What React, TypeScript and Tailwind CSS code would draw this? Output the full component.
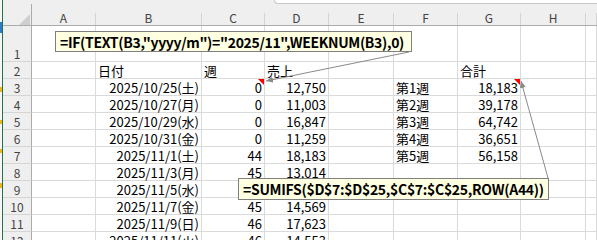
import React from "react";

type Cell = { t?: string; al?: "l" | "r"; tri?: boolean };
type Row = { n: number; h: string; cells: Record<string, Cell> };

const cols = [
  { k: "A", w: "w-[64px]" },
  { k: "B", w: "w-[106px]" },
  { k: "C", w: "w-[63px]" },
  { k: "D", w: "w-[64px]" },
  { k: "E", w: "w-[65px]" },
  { k: "F", w: "w-[64px]" },
  { k: "G", w: "w-[63px]" },
  { k: "H", w: "w-[65px]" },
  { k: "I", w: "w-[11px]" },
];

const r = (t: string): Cell => ({ t, al: "r" });
const l = (t: string): Cell => ({ t, al: "l" });

const rows: Row[] = [
  { n: 1, h: "h-[36px]", cells: {} },
  { n: 2, h: "h-[17px]", cells: { B: l("日付"), C: l("週"), D: l("売上"), G: l("合計") } },
  { n: 3, h: "h-[17px]", cells: { B: r("2025/10/25(土)"), C: { t: "0", al: "r", tri: true }, D: r("12,750"), F: l("第1週"), G: { t: "18,183", al: "r", tri: true } } },
  { n: 4, h: "h-[17px]", cells: { B: r("2025/10/27(月)"), C: r("0"), D: r("11,003"), F: l("第2週"), G: r("39,178") } },
  { n: 5, h: "h-[17px]", cells: { B: r("2025/10/29(水)"), C: r("0"), D: r("16,847"), F: l("第3週"), G: r("64,742") } },
  { n: 6, h: "h-[17px]", cells: { B: r("2025/10/31(金)"), C: r("0"), D: r("11,259"), F: l("第4週"), G: r("36,651") } },
  { n: 7, h: "h-[17px]", cells: { B: r("2025/11/1(土)"), C: r("44"), D: r("18,183"), F: l("第5週"), G: r("56,158") } },
  { n: 8, h: "h-[17px]", cells: { B: r("2025/11/3(月)"), C: r("45"), D: r("13,014") } },
  { n: 9, h: "h-[17px]", cells: { B: r("2025/11/5(水)"), C: r("45"), D: r("11,595") } },
  { n: 10, h: "h-[17px]", cells: { B: r("2025/11/7(金)"), C: r("45"), D: r("14,569") } },
  { n: 11, h: "h-[17px]", cells: { B: r("2025/11/9(日)"), C: r("46"), D: r("17,623") } },
  { n: 12, h: "h-[17px]", cells: { B: r("2025/11/11(火)"), C: r("46"), D: r("14,553") } },
];

function RedTri() {
  return (
    <svg className="absolute right-0 top-0" width="6" height="6" viewBox="0 0 6 6">
      <polygon points="0,0 6,0 6,6" fill="#ff0000" />
    </svg>
  );
}

export default function App() {
  return (
    <div className="relative w-[597px] h-[240px] overflow-hidden bg-white flex font-['Noto_Sans_CJK_JP',sans-serif] text-black">
      {/* left window edge */}
      <div className="w-[2px] h-full shrink-0 bg-[#f6f6f6] flex flex-col">
        <div className="h-[22px] shrink-0" />
        <div className="h-[11px] shrink-0 bg-[#2f7bc9]" />
        <div className="h-[54px] shrink-0" />
        <div className="h-[5px] shrink-0 bg-[#e8b923]" />
        <div className="h-[28px] shrink-0" />
        <div className="h-[4px] shrink-0 bg-[#e8b923]" />
        <div className="h-[25px] shrink-0" />
        <div className="h-[4px] shrink-0 bg-[#e8b923]" />
        <div className="h-[30px] shrink-0" />
        <div className="h-[5px] shrink-0 bg-[#e8b923]" />
      </div>
      <div className="w-[1px] h-full shrink-0 bg-[#217346]" />

      {/* sheet */}
      <div className="flex flex-col flex-1 min-h-0">
        {/* top strip */}
        <div className="h-[4px] shrink-0 flex bg-[#efefef]">
          <div className="w-[271px]" />
          <div className="flex-1 bg-white border-l border-b border-[#c8c8c8] rounded-bl-[5px]" />
        </div>
        {/* column header */}
        <div className="h-[22px] shrink-0 flex bg-[#efefef] border-b border-[#ababab]">
          <div className="w-[29px] h-full flex items-end justify-end border-r border-[#ababab]">
            <svg width="11" height="11" viewBox="0 0 11 11" className="mr-[1px]">
              <polygon points="11,0 11,11 0,11" fill="#cfcfcf" />
            </svg>
          </div>
          {cols.map((c) => (
            <div key={c.k} className={`${c.w} h-full flex items-end`}>
              <div className="flex-1 text-center text-[12px] leading-[14px] text-[#444]">
                {c.k === "I" ? "" : c.k}
              </div>
              <div className="w-[1px] h-[12px] bg-[#d4d4d4]" />
            </div>
          ))}
        </div>
        {/* rows */}
        {rows.map((row) => (
          <div key={row.n} className={`${row.h} flex shrink-0`}>
            <div className="w-[29px] h-full flex items-end justify-center bg-[#efefef] border-r border-b border-r-[#ababab] border-b-[#d5d5d5] text-[12px] leading-[14px] text-[#444]">
              {row.n}
            </div>
            {cols.map((c) => {
              const cell = row.cells[c.k];
              return (
                <div
                  key={c.k}
                  className={`${c.w} h-full relative flex items-end border-r border-b border-[#dadada] text-[13px] leading-[14px] whitespace-nowrap ${
                    cell?.al === "r" ? "justify-end pr-[2px]" : "justify-start pl-[2px]"
                  }`}
                >
                  {cell?.t}
                  {cell?.tri && <RedTri />}
                </div>
              );
            })}
          </div>
        ))}
      </div>

      {/* connector lines */}
      <svg className="absolute inset-0 pointer-events-none" width="597" height="240" viewBox="0 0 597 240">
        <defs>
          <marker id="arr" markerWidth="7" markerHeight="6" refX="7" refY="3" orient="auto" markerUnits="userSpaceOnUse">
            <path d="M0,0 L7,3 L0,6 z" fill="#8a8a8a" />
          </marker>
        </defs>
        <line x1="409" y1="52" x2="266" y2="81" stroke="#8a8a8a" strokeWidth="1" markerEnd="url(#arr)" />
        <line x1="548" y1="178" x2="521" y2="81" stroke="#8a8a8a" strokeWidth="1" markerEnd="url(#arr)" />
      </svg>

      {/* comment callouts */}
      <div className="absolute left-[55px] top-[31px] w-[357px] h-[21px] bg-[#ffffe1] border border-[#7f7f7f] flex items-center pl-[4px] text-[14px] tracking-[-0.33px] font-bold leading-[16px] whitespace-nowrap">
        =IF(TEXT(B3,"yyyy/m")="2025/11",WEEKNUM(B3),0)
      </div>
      <div className="absolute left-[238px] top-[178px] w-[311px] h-[22px] bg-[#ffffe1] border border-[#7f7f7f] flex items-center pl-[4px] text-[14px] tracking-[-0.3px] font-bold leading-[16px] whitespace-nowrap">
        =SUMIFS($D$7:$D$25,$C$7:$C$25,ROW(A44))
      </div>
    </div>
  );
}
